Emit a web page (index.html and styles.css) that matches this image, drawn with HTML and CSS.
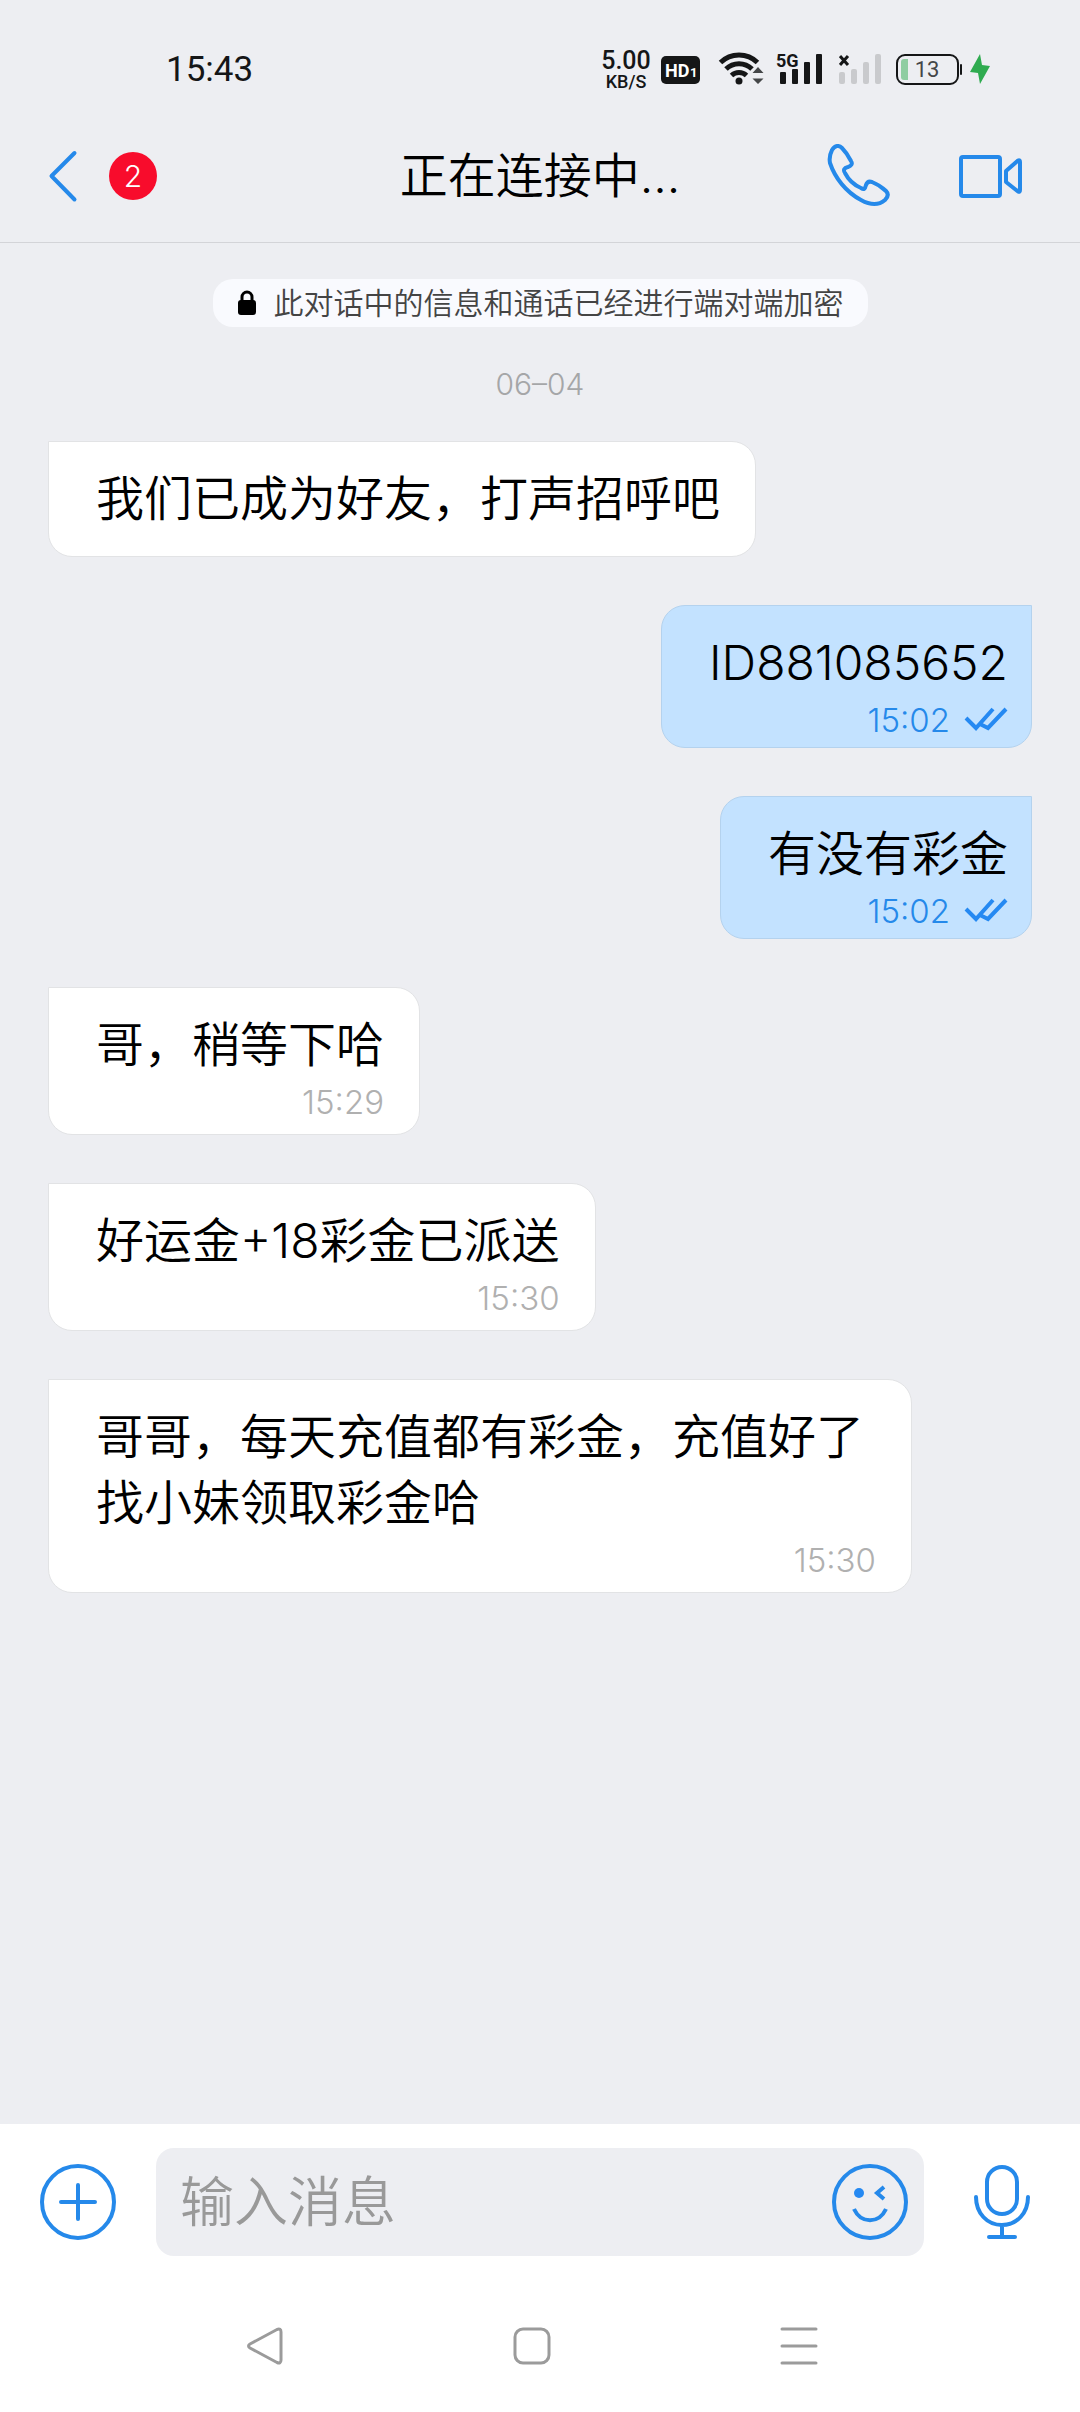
FILE: index.html
```html
<!DOCTYPE html>
<html lang="zh-CN">
<head>
    <meta charset="UTF-8">
    <meta name="viewport" content="width=device-width, initial-scale=1.0">
    <title>正在连接中...</title>
    <link rel="stylesheet" href="styles.css">
</head>
<body>
    <div class="status-bar">
        <span class="clock">15:43</span>
        <div class="status-icons">
            <div class="speed">
                <span class="speed-value">5.00</span>
                <span class="speed-unit">KB/S</span>
            </div>
            <svg width="49" height="40" viewBox="0 0 49 40">
                <rect x="0" y="7" width="39" height="28" rx="5" fill="#151617"/>
                <text x="4" y="28" class="hd-text">HD</text>
                <text x="29" y="28" class="hd-num">1</text>
            </svg>
            <svg width="50" height="40" viewBox="0 0 50 40">
                <g fill="none" stroke="#151617" stroke-width="5">
                    <path d="M2.500 13.500a26.500 26.500 0 0 1 37 0"/>
                    <path d="M8 20a18.500 18.500 0 0 1 26 0"/>
                    <path d="M13.500 26.500a11 11 0 0 1 15 0"/>
                </g>
                <circle cx="21" cy="32" r="3.500" fill="#151617"/>
                <path d="M40 18l5.500 6h-11zM40 35l5.500-5.500h-11z" fill="#444648"/>
            </svg>
            <svg width="55" height="40" viewBox="0 0 55 40" fill="#151617">
                <text x="0" y="18" class="net-text">5G</text>
                <rect x="4" y="23" width="6" height="12" rx="1"/>
                <rect x="16" y="20" width="6" height="15" rx="1"/>
                <rect x="28" y="13" width="6" height="22" rx="1"/>
                <rect x="40" y="5" width="6" height="30" rx="1"/>
            </svg>
            <svg width="48" height="40" viewBox="0 0 48 40" fill="#c9cacd">
                <path d="M1 7l8 9M9 7l-8 9" stroke="#151617" stroke-width="3"/>
                <rect x="0" y="23" width="6" height="12" rx="2"/>
                <rect x="12" y="20" width="6" height="15" rx="2"/>
                <rect x="24" y="13" width="6" height="22" rx="2"/>
                <rect x="36" y="5" width="6" height="30" rx="2"/>
            </svg>
            <svg width="67" height="40" viewBox="0 0 67 40">
                <rect x="2" y="6" width="61" height="29" rx="8" fill="none" stroke="#151617" stroke-width="2"/>
                <rect x="65" y="15" width="2" height="11" rx="1" fill="#151617"/>
                <path d="M9 10h4v21H9a3 3 0 0 1-3-3V13a3 3 0 0 1 3-3z" fill="#8fcda2"/>
                <text x="32" y="28" text-anchor="middle" class="battery-text">13</text>
            </svg>
            <svg width="20" height="40" viewBox="0 0 20 40">
                <path d="M10 5L0 23l8 1 2 11 10-18-8-1z" fill="#2fab50"/>
            </svg>
        </div>
    </div>

    <header class="chat-header">
        <div class="header-left">
            <button class="icon-btn" aria-label="返回">
                <svg width="30" height="54" viewBox="0 0 30 54" fill="none" stroke="#2589ea" stroke-width="4" stroke-linecap="round" stroke-linejoin="round">
                    <path d="M26.500 4L3.500 27l23 23.500"/>
                </svg>
            </button>
            <span class="badge">2</span>
        </div>
        <h1>正在连接中...</h1>
        <div class="header-right">
            <button class="icon-btn" aria-label="语音通话">
                <svg width="64" height="64" viewBox="0 0 64 64" fill="none" stroke="#2589ea" stroke-width="4" stroke-linejoin="round">
                    <path d="M5 6C8 1 12 1 15 4C19 8 22 13 24 17C26 20 24 22 21 23C17 24 16 26 18 29C21 35 27 41 34 44C37 46 38 45 39 41C40 38 42 37 45 38C50 40 55 43 59 47C62 50 61 53 58 56C51 62 43 61 34 56C19 48 8 34 3 19C2 14 3 10 5 6Z"/>
                </svg>
            </button>
            <button class="icon-btn" aria-label="视频通话">
                <svg width="66" height="44" viewBox="0 0 66 44" fill="none" stroke="#2589ea" stroke-width="4" stroke-linejoin="round">
                    <rect x="3" y="3" width="39" height="39" rx="2"/>
                    <path d="M48 17L60 6.500Q62 5.500 62 8V36Q62 38.500 60 37.500L48 28z"/>
                </svg>
            </button>
        </div>
    </header>

    <main class="messages">
        <div class="notice">
            <svg width="20" height="26" viewBox="0 0 20 26">
                <path d="M5 12V7a5 5 0 0 1 10 0v5" fill="none" stroke="#000" stroke-width="3"/>
                <rect x="1" y="10" width="18" height="15" rx="3"/>
            </svg>
            <span>此对话中的信息和通话已经进行端对端加密</span>
        </div>
        <div class="date">06–04</div>

        <div class="bubble in">
            <p>我们已成为好友，打声招呼吧</p>
        </div>
        <div class="bubble out">
            <p>ID881085652</p>
            <div class="meta">15:02
                <svg width="44" height="26" viewBox="0 0 44 26" fill="none" stroke="#2589f2" stroke-width="4">
                    <path d="M2 11l10 10L29 2M16 17l8 4L42 2"/>
                </svg>
            </div>
        </div>
        <div class="bubble out">
            <p>有没有彩金</p>
            <div class="meta">15:02
                <svg width="44" height="26" viewBox="0 0 44 26" fill="none" stroke="#2589f2" stroke-width="4">
                    <path d="M2 11l10 10L29 2M16 17l8 4L42 2"/>
                </svg>
            </div>
        </div>
        <div class="bubble in">
            <p>哥，稍等下哈</p>
            <div class="meta">15:29</div>
        </div>
        <div class="bubble in">
            <p>好运金+18彩金已派送</p>
            <div class="meta">15:30</div>
        </div>
        <div class="bubble in">
            <p>哥哥，每天充值都有彩金，充值好了找小妹领取彩金哈</p>
            <div class="meta">15:30</div>
        </div>
    </main>

    <footer class="composer">
        <button class="icon-btn" aria-label="更多">
            <svg width="76" height="78" viewBox="0 0 76 78" fill="none" stroke="#2589ea" stroke-width="4" stroke-linecap="round">
                <circle cx="38" cy="39" r="36"/>
                <path d="M38 22v34M21 39h34"/>
            </svg>
        </button>
        <div class="input-box">
            <input type="text" class="input" placeholder="输入消息" aria-label="输入消息">
            <button class="icon-btn" aria-label="表情">
                <svg width="76" height="78" viewBox="0 0 76 78" fill="none" stroke="#2589ea" stroke-width="4">
                    <circle cx="38" cy="39" r="36"/>
                    <circle cx="27" cy="30" r="5" fill="#2589f2" stroke="none"/>
                    <path d="M52 24l-7 6 7 6"/>
                    <path d="M22 46c7 15 25 15 32 0"/>
                </svg>
            </button>
        </div>
        <button class="icon-btn" aria-label="语音输入">
            <svg width="56" height="76" viewBox="0 0 56 76" fill="none" stroke="#2589ea" stroke-width="4" stroke-linecap="round">
                <rect x="13" y="3" width="30" height="47" rx="15"/>
                <path d="M2 33c0 16 11 28 26 28s26-12 26-28M28 61v12M15 73h26"/>
            </svg>
        </button>
    </footer>

    <nav class="nav-bar">
        <button class="icon-btn" aria-label="返回">
            <svg width="38" height="38" viewBox="0 0 38 38" fill="none" stroke="#9b9b9b" stroke-width="3" stroke-linejoin="round">
                <path d="M4 17L31 2.500Q35 1 35 5V33Q35 37 31 35.500L4 21Q1 19 4 17z"/>
            </svg>
        </button>
        <button class="icon-btn" aria-label="主屏幕">
            <svg width="38" height="38" viewBox="0 0 38 38" fill="none" stroke="#9b9b9b" stroke-width="3">
                <rect x="2" y="2" width="34" height="34" rx="8"/>
            </svg>
        </button>
        <button class="icon-btn" aria-label="最近任务">
            <svg width="38" height="38" viewBox="0 0 38 38" fill="none" stroke="#9b9b9b" stroke-width="3" stroke-linecap="round">
                <path d="M2 2h34M2 19h34M2 36h34"/>
            </svg>
        </button>
    </nav>
</body>
</html>
```
FILE: styles.css
```css
* {
    box-sizing: border-box;
    margin: 0;
    padding: 0;
}
body {
    display: flex;
    flex-direction: column;
    min-height: 100vh;
    background-color: #edeef2;
    color: #000;
    font-family: Inter, "Noto Sans CJK SC", sans-serif;
    font-weight: 350;
}
svg {
    display: block;
    flex: none;
}
.icon-btn {
    display: flex;
    background: none;
    border: none;
    cursor: pointer;
}

/* system status bar */
.status-bar {
    display: flex;
    justify-content: space-between;
    align-items: center;
    height: 110px;
    padding: 28px 90px 0 166px;
    color: #151617;
    font-family: Roboto, sans-serif;
}
.clock {
    font-size: 35px;
    font-weight: 400;
}
.status-icons {
    display: flex;
    align-items: center;
    gap: 8px;
}
.speed {
    display: flex;
    flex-direction: column;
    align-items: center;
    width: 54px;
    font-weight: 500;
}
.speed-value {
    font-size: 25px;
    line-height: 25px;
}
.speed-unit {
    font-size: 18px;
    line-height: 18px;
}
.hd-text {
    font-size: 18px;
    font-weight: 700;
    fill: #fff;
}
.hd-num {
    font-size: 13px;
    font-weight: 700;
    fill: #fff;
}
.net-text {
    font-size: 18px;
    font-weight: 700;
}
.battery-text {
    font-size: 22px;
    font-weight: 400;
    fill: #444648;
}

/* chat header */
.chat-header {
    display: grid;
    grid-template-columns: 1fr auto 1fr;
    align-items: center;
    height: 133px;
    padding: 0 48px;
    border-bottom: 1px solid #d3d4d8;
}
.header-left {
    display: flex;
    align-items: center;
    gap: 31px;
}
.header-right {
    display: flex;
    align-items: center;
    justify-content: flex-end;
    gap: 67px;
    padding-right: 8px;
}
.badge {
    width: 48px;
    height: 48px;
    border-radius: 50%;
    background-color: #f80c2c;
    color: #fff;
    font-size: 30px;
    line-height: 48px;
    text-align: center;
}
h1 {
    font-size: 48px;
    font-weight: 350;
    line-height: 66px;
}

/* conversation */
.messages {
    flex: 1;
    display: flex;
    flex-direction: column;
    align-items: flex-start;
    padding: 36px 48px;
}
.notice {
    display: flex;
    align-items: center;
    align-self: center;
    gap: 17px;
    height: 48px;
    padding: 0 24px;
    border-radius: 20px;
    background-color: #f9fafe;
    color: #444;
    font-size: 30px;
}
.notice span {
    padding-bottom: 4px;
}
.date {
    align-self: center;
    margin: 36px 0;
    color: #a5a6a8;
    font-size: 30px;
    line-height: 42px;
}
.bubble {
    max-width: 80vw;
    margin-bottom: 48px;
    border: 1px solid #e2e3e5;
    font-size: 48px;
    line-height: 66px;
}
.in {
    padding: 24px 35px 24px 47px;
    border-radius: 0 24px 24px 24px;
    background-color: #fff;
}
.in:has(.meta) {
    padding-bottom: 8px;
}
.out {
    align-self: flex-end;
    padding: 24px 23px 3px 47px;
    border-color: #b4d2ee;
    border-radius: 24px 0 24px 24px;
    background-color: #c3e2ff;
}
.meta {
    display: flex;
    justify-content: flex-end;
    align-items: center;
    gap: 14px;
    color: #b0b0b0;
    font-size: 33px;
    line-height: 48px;
}
.out .meta {
    color: #2589ea;
}

/* message composer */
.composer {
    display: flex;
    align-items: center;
    gap: 40px;
    padding: 24px 50px 24px 40px;
    background-color: #fff;
}
.input-box {
    flex: 1;
    min-width: 0;
    display: flex;
    align-items: center;
    height: 108px;
    margin-right: 10px;
    padding: 0 16px 0 24px;
    border-radius: 18px;
    background-color: #edeef2;
}
.input {
    flex: 1;
    min-width: 0;
    border: none;
    outline: none;
    background: none;
    color: #000;
    font: inherit;
    font-size: 54px;
}
.input::placeholder {
    color: #999;
}

/* system navigation */
.nav-bar {
    display: grid;
    grid-template-columns: repeat(3, 1fr);
    justify-items: center;
    padding: 47px 147px 47px 131px;
    background-color: #fff;
}
```
